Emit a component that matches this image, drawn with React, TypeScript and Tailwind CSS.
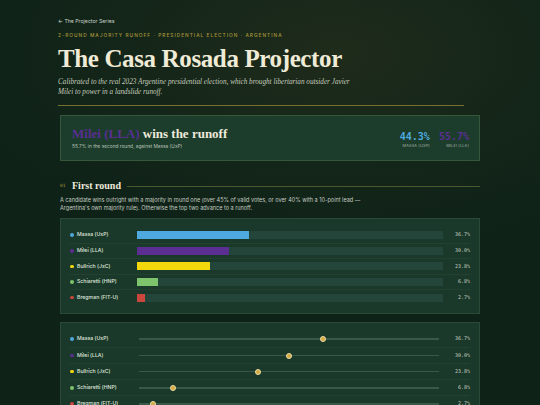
import React from "react";

const cands = [
  { name: "Massa (UxP)", pct: 36.7, color: "#4ea9de" },
  { name: "Milei (LLA)", pct: 30.0, color: "#5b2e92" },
  { name: "Bullrich (JxC)", pct: 23.8, color: "#f3d80c" },
  { name: "Schiaretti (HNP)", pct: 6.8, color: "#7dc46c" },
  { name: "Bregman (FIT-U)", pct: 2.7, color: "#c9473d" },
];

function Label({ name, color }: { name: string; color: string }) {
  return (
    <div className="flex items-center w-[67px] shrink-0 gap-[3.5px]">
      <span className="w-[3.5px] h-[3.5px] rounded-full shrink-0" style={{ backgroundColor: color }} />
      <span className="text-[5.2px] text-[#dfe6dc] font-medium whitespace-nowrap">{name}</span>
    </div>
  );
}

export default function App() {
  return (
    <div className="min-h-screen w-full bg-[#0f2218] bg-[radial-gradient(ellipse_70%_45%_at_62%_12%,#1f2b1b_0%,#142619_55%,#0f2218_100%)] font-['Inter',sans-serif] overflow-hidden">
      <div className="px-[60px] pt-[17px] pb-[20px]">
        <div className="text-[5.2px] leading-[8px] text-[#cdd6cb] -ml-[2px]">← The Projector Series</div>
        <div className="mt-[7px] -ml-[2px] text-[4.8px] leading-[7px] tracking-[0.21em] text-[#a8963a] uppercase font-medium">
          2-Round Majority Runoff · Presidential Election · Argentina
        </div>
        <h1 className="mt-[5px] -ml-[2px] font-['Liberation_Serif',serif] font-bold text-[25px] leading-[30px] tracking-[-0.015em] text-[#f0ebd6]">
          The Casa Rosada Projector
        </h1>
        <p className="mt-[3px] -ml-[2px] w-[300px] font-['Liberation_Serif',serif] italic text-[7.2px] leading-[10px] text-[#c5ccbd]">
          Calibrated to the real 2023 Argentine presidential election, which brought libertarian outsider Javier Milei to power in a landslide runoff.
        </p>
        <div className="mt-[8px] -ml-[2px] h-px w-[406px] bg-[#77702f]" />

        <div className="mt-[9px] h-[46px] border border-[#36573a] bg-[#1c3c2c] flex items-center justify-between pl-[11px] pr-[10px]">
          <div>
            <div className="font-['Liberation_Serif',serif] font-bold text-[13px] leading-[15px] text-[#eeeadb]">
              <span className="text-[#5a2f92]">Milei (LLA)</span> wins the runoff
            </div>
            <div className="mt-[2px] text-[4.8px] leading-[7px] text-[#b8c3b6]">55.7% in the second round, against Massa (UxP)</div>
          </div>
          <div className="flex gap-[9px] mt-[4px]">
            <div className="flex flex-col items-end">
              <div className="font-['DejaVu_Sans_Mono',monospace] font-bold text-[10px] leading-[12px] text-[#4ea9de]">44.3%</div>
              <div className="text-[3.8px] leading-[6px] tracking-[0.05em] text-[#a9b5a7] uppercase">Massa (UxP)</div>
            </div>
            <div className="flex flex-col items-end">
              <div className="font-['DejaVu_Sans_Mono',monospace] font-bold text-[10px] leading-[12px] text-[#5b2e92]">55.7%</div>
              <div className="text-[3.8px] leading-[6px] tracking-[0.05em] text-[#a9b5a7] uppercase">Milei (LLA)</div>
            </div>
          </div>
        </div>

        <div className="mt-[19px] flex items-center">
          <span className="text-[4.5px] text-[#a8963a] font-['DejaVu_Sans_Mono',monospace] w-[12px]">01</span>
          <span className="font-['Liberation_Serif',serif] font-bold text-[10px] leading-[12px] text-[#eeeadb]">First round</span>
          <div className="ml-[6px] flex-1 h-px bg-[#4a5a2e]" />
        </div>
        <p className="mt-[4px] w-[310px] text-[5.5px] leading-[8px] text-[#c3ccc0]">
          A candidate wins outright with a majority in round one (over 45% of valid votes, or over 40% with a 10-point lead — Argentina's own majority rule). Otherwise the top two advance to a runoff.
        </p>

        <div className="mt-[6px] border border-[#2a4a36] bg-[#1b392a] px-[9px] py-[8px]">
          {cands.map((c, i) => (
            <div key={c.name} className={`flex items-center h-[15.6px] ${i > 0 ? "border-t border-[#22412f]" : ""}`}>
              <Label name={c.name} color={c.color} />
              <div className="flex-1 h-[8px] bg-[#24463a]">
                <div className="h-full" style={{ width: `${c.pct}%`, backgroundColor: c.color }} />
              </div>
              <div className="w-[27px] text-right font-['DejaVu_Sans_Mono',monospace] text-[5px] text-[#c9d2c6]">{c.pct.toFixed(1)}%</div>
            </div>
          ))}
        </div>

        <div className="mt-[8px] border border-[#2a4a36] bg-[#1b392a] px-[9px] py-[8px]">
          {cands.map((c, i) => (
            <div key={c.name} className={`flex items-center h-[16.1px] ${i > 0 ? "border-t border-[#22412f]" : ""}`}>
              <Label name={c.name} color={c.color} />
              <div className="flex-1 mx-[2px] relative h-[6px] flex items-center">
                <div className="w-full h-[1.5px] bg-[#38594a]" />
                <div
                  className="absolute top-0 w-[6px] h-[6px] -ml-[3px] rounded-full bg-[#d3aa43] border border-[#ecdca3]"
                  style={{ left: `${(c.pct / 60) * 100}%` }}
                />
              </div>
              <div className="w-[29px] text-right font-['DejaVu_Sans_Mono',monospace] text-[5px] text-[#c9d2c6]">{c.pct.toFixed(1)}%</div>
            </div>
          ))}
        </div>
      </div>
    </div>
  );
}
